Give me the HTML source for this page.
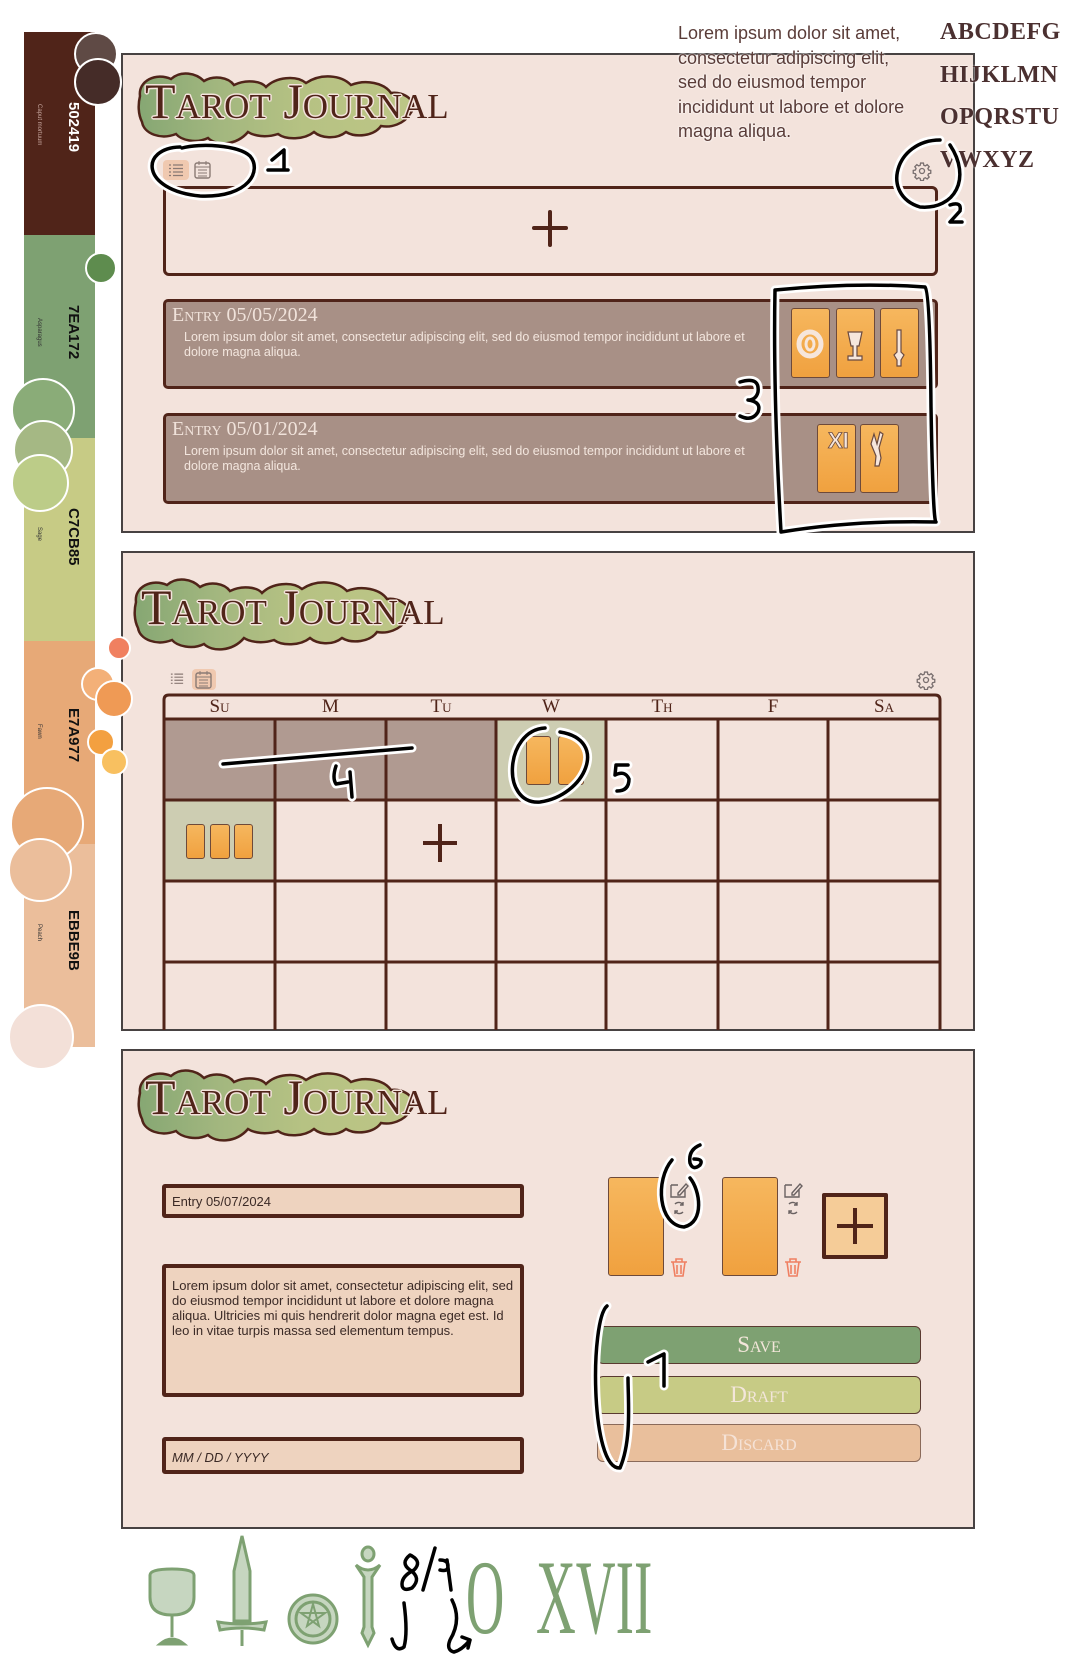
<!DOCTYPE html>
<html><head><meta charset="utf-8">
<style>
*{margin:0;padding:0;box-sizing:border-box}
body{width:1080px;height:1677px;background:#fff;position:relative;overflow:hidden;font-family:"Liberation Sans",sans-serif}
.a{position:absolute}
.panel{position:absolute;left:121px;width:854px;height:480px;background:#f3e3dc;border:2px solid #474242;overflow:hidden}
.title{position:absolute;font-family:"Liberation Serif",serif;font-variant:small-caps;font-size:50px;color:#502419;white-space:nowrap;
text-shadow:1.5px 0 #f3e3dc,-1.5px 0 #f3e3dc,0 1.5px #f3e3dc,0 -1.5px #f3e3dc,1px 1px #f3e3dc,-1px -1px #f3e3dc,1px -1px #f3e3dc,-1px 1px #f3e3dc;letter-spacing:0px}
.sc{font-family:"Liberation Serif",serif;font-variant:small-caps}
.entry{position:absolute;left:163px;width:775px;background:#a89086;border:3px solid #502419;border-radius:5px}
.entry .h{position:absolute;left:6px;top:2px;font-size:20px;color:#f0e2da}
.entry .t{position:absolute;left:18px;top:28px;font-size:12.5px;line-height:15px;color:#f3e6de;width:600px}
.card{position:absolute;background:linear-gradient(#f6b75e,#f0a13f);border:1px solid #6e4a3a;border-radius:3px}
.cell{position:absolute}
.inp{position:absolute;left:162px;width:362px;background:#eed3bf;border:4px solid #502419;border-radius:3px;font-size:13px;color:#3b2a26;padding:6px 6px}
.btn{position:absolute;left:597px;width:324px;height:38px;border:1.5px solid #5a3a30;border-radius:6px;text-align:center;font-size:23px;line-height:36px;color:#f3e6da}
</style></head><body>

<div class="a" style="left:24px;top:32px;width:71px;height:203px;background:#502419"></div>
<div class="a" style="left:24px;top:235px;width:71px;height:203px;background:#7ea172"></div>
<div class="a" style="left:24px;top:438px;width:71px;height:203px;background:#c7cb85"></div>
<div class="a" style="left:24px;top:641px;width:71px;height:203px;background:#e7a977"></div>
<div class="a" style="left:24px;top:844px;width:71px;height:203px;background:#ebbe9b"></div>
<div class="a" style="left:24px;top:32px;width:71px;height:1015px">
 <div class="a" style="left:30px;top:70px;transform-origin:0 0;transform:translate(28px,0) rotate(90deg);font-weight:bold;font-size:15px;color:#fff;white-space:nowrap">502419</div>
 <div class="a" style="left:10px;top:72px;transform-origin:0 0;transform:translate(8px,0) rotate(90deg);font-size:6px;color:#c8a8a0;white-space:nowrap">Caput mortuum</div>
 <div class="a" style="left:30px;top:273px;transform-origin:0 0;transform:translate(28px,0) rotate(90deg);font-weight:bold;font-size:15px;color:#111;white-space:nowrap">7EA172</div>
 <div class="a" style="left:10px;top:286px;transform-origin:0 0;transform:translate(8px,0) rotate(90deg);font-size:6px;color:#333;white-space:nowrap">Asparagus</div>
 <div class="a" style="left:30px;top:476px;transform-origin:0 0;transform:translate(28px,0) rotate(90deg);font-weight:bold;font-size:15px;color:#111;white-space:nowrap">C7CB85</div>
 <div class="a" style="left:10px;top:495px;transform-origin:0 0;transform:translate(8px,0) rotate(90deg);font-size:6px;color:#333;white-space:nowrap">Sage</div>
 <div class="a" style="left:30px;top:676px;transform-origin:0 0;transform:translate(28px,0) rotate(90deg);font-weight:bold;font-size:15px;color:#111;white-space:nowrap">E7A977</div>
 <div class="a" style="left:10px;top:692px;transform-origin:0 0;transform:translate(8px,0) rotate(90deg);font-size:6px;color:#333;white-space:nowrap">Fawn</div>
 <div class="a" style="left:30px;top:878px;transform-origin:0 0;transform:translate(28px,0) rotate(90deg);font-weight:bold;font-size:15px;color:#111;white-space:nowrap">EBBE9B</div>
 <div class="a" style="left:10px;top:892px;transform-origin:0 0;transform:translate(8px,0) rotate(90deg);font-size:6px;color:#333;white-space:nowrap">Peach</div>
</div>

<div class="panel" style="top:53px"></div>
<div class="panel" style="top:551px"></div>
<div class="panel" style="top:1049px"></div>

<svg class="a" style="left:136px;top:66px" width="290" height="82" viewBox="0 0 290 82">
<defs><linearGradient id="lg" x1="0" x2="1"><stop offset="0" stop-color="#86a773"/><stop offset="0.3" stop-color="#a3b77f"/><stop offset="0.6" stop-color="#b6c283"/><stop offset="1" stop-color="#bdc686"/></linearGradient></defs>
<path id="blob" d="M4,30 C2,15 20,6 35,13 C45,4 60,7 68,15 C78,9 92,11 98,19 C110,13 125,15 130,21 C140,11 160,9 170,17 C185,7 205,9 215,19 C230,13 248,17 255,27 C268,25 284,36 274,48 C268,58 255,62 245,60 C238,70 220,72 210,66 C200,74 185,72 178,66 C168,74 150,74 142,68 C130,72 118,70 112,66 C100,80 80,80 72,72 C60,78 45,74 40,68 C25,74 8,68 6,56 C2,48 2,38 4,30 Z" fill="url(#lg)" stroke="#502419" stroke-width="2.5"/>
</svg>
<svg class="a" style="left:132px;top:572px" width="290" height="82" viewBox="0 0 290 82"><use href="#blob"/></svg>
<svg class="a" style="left:136px;top:1063px" width="290" height="82" viewBox="0 0 290 82"><use href="#blob"/></svg>
<div class="title" style="left:145px;top:72px">Tarot Journal</div>
<div class="title" style="left:141px;top:578px">Tarot Journal</div>
<div class="title" style="left:145px;top:1068px">Tarot Journal</div>

<div class="a" style="left:163px;top:160px;width:26px;height:20px;background:#f0c9b0;border-radius:4px"></div>
<svg class="a" style="left:168px;top:163px" width="16" height="14" viewBox="0 0 16 14" stroke="#8a7a74" stroke-width="1.3"><path d="M1 2h2M5 2h10M1 5.5h2M5 5.5h10M1 9h2M5 9h10M1 12.5h2M5 12.5h10"/></svg>
<svg class="a" style="left:194px;top:160px" width="17" height="19" viewBox="0 0 17 19" fill="none" stroke="#8a7a74" stroke-width="1.4"><rect x="1" y="3" width="15" height="15" rx="2"/><path d="M1 7h15M5 1v4M12 1v4M4 10h9M4 13h9M4 16h9" stroke-width="1"/></svg>
<svg class="a" style="left:912px;top:161px" width="20" height="20" viewBox="0 0 24 24" fill="none" stroke="#7a7070" stroke-width="1.6"><circle cx="12" cy="12" r="3"/><path d="M10.3 2.5h3.4l.5 2.6 1.8.8 2.2-1.5 2.4 2.4-1.5 2.2.8 1.8 2.6.5v3.4l-2.6.5-.8 1.8 1.5 2.2-2.4 2.4-2.2-1.5-1.8.8-.5 2.6h-3.4l-.5-2.6-1.8-.8-2.2 1.5-2.4-2.4 1.5-2.2-.8-1.8-2.6-.5v-3.4l2.6-.5.8-1.8-1.5-2.2 2.4-2.4 2.2 1.5 1.8-.8z"/></svg>

<div class="a" style="left:163px;top:186px;width:775px;height:90px;border:3px solid #502419;border-radius:3px 6px 6px 6px"></div>
<div class="a" style="left:532px;top:226px;width:36px;height:4px;background:#502419;border-radius:2px"></div>
<div class="a" style="left:548px;top:210px;width:4px;height:37px;background:#502419;border-radius:2px"></div>

<div class="entry" style="top:299px;height:90px"><div class="h sc">Entry 05/05/2024</div><div class="t">Lorem ipsum dolor sit amet, consectetur adipiscing elit, sed do eiusmod tempor incididunt ut labore et<br>dolore magna aliqua.</div></div>
<div class="entry" style="top:413px;height:91px"><div class="h sc">Entry 05/01/2024</div><div class="t">Lorem ipsum dolor sit amet, consectetur adipiscing elit, sed do eiusmod tempor incididunt ut labore et<br>dolore magna aliqua.</div></div>
<div class="card" style="left:791px;top:308px;width:39px;height:70px"></div>
<div class="card" style="left:836px;top:308px;width:39px;height:70px"></div>
<div class="card" style="left:880px;top:308px;width:39px;height:70px"></div>
<div class="card" style="left:817px;top:424px;width:39px;height:69px"></div>
<div class="card" style="left:860px;top:424px;width:39px;height:69px"></div>
<svg class="a" style="left:791px;top:308px" width="130" height="186" fill="#f6e6dc" stroke="#6a4a40" stroke-width="1.2">
<ellipse cx="19" cy="36" rx="11" ry="12" fill="none" stroke="#f6e6dc" stroke-width="5"/><ellipse cx="19" cy="36" rx="4" ry="6" fill="none" stroke="#f6e6dc" stroke-width="3"/>
<path d="M57 24h14l-3 14h-2v10h5v4h-14v-4h5v-10h-2z"/>
<path d="M106 22h4v22l3 3-3 5v6h-4v-6l-3-5 3-3z"/>
<text x="37" y="140" font-family="Liberation Sans" font-weight="bold" font-size="22" fill="#f6e6dc" stroke="#6a4a40" stroke-width="0.8">XI</text>
<path d="M83 126l3 10 3-12 3 2-4 14 2 10-2 8h-4l1-10-5-12z"/>
</svg>

<div class="a" style="left:678px;top:21px;font-size:18px;line-height:24.5px;color:#5a3c38;white-space:nowrap;text-shadow:0 0 2px #fff,0 0 2px #fff">Lorem ipsum dolor sit amet,<br>consectetur adipiscing elit,<br>sed do eiusmod tempor<br>incididunt ut labore et dolore<br>magna aliqua.</div>
<div class="a" style="left:940px;top:11px;font-family:'Liberation Serif',serif;font-weight:bold;font-size:24px;line-height:42.5px;color:#4b3030;text-shadow:0 0 2px #fff;letter-spacing:0.5px">ABCDEFG<br>HIJKLMN<br>OPQRSTU<br>VWXYZ</div>

<div class="a" style="left:192px;top:669px;width:24px;height:21px;background:#f0c9b0;border-radius:4px"></div>
<svg class="a" style="left:170px;top:672px" width="14" height="13" viewBox="0 0 16 14" stroke="#8a7a74" stroke-width="1.3"><path d="M1 2h2M5 2h10M1 5.5h2M5 5.5h10M1 9h2M5 9h10M1 12.5h2M5 12.5h10"/></svg>
<svg class="a" style="left:195px;top:670px" width="17" height="19" viewBox="0 0 17 19" fill="none" stroke="#8a7a74" stroke-width="1.4"><rect x="1" y="3" width="15" height="15" rx="2"/><path d="M1 7h15M5 1v4M12 1v4M4 10h9M4 13h9M4 16h9" stroke-width="1"/></svg>
<svg class="a" style="left:916px;top:670px" width="20" height="20" viewBox="0 0 24 24" fill="none" stroke="#7a7070" stroke-width="1.6"><circle cx="12" cy="12" r="3"/><path d="M10.3 2.5h3.4l.5 2.6 1.8.8 2.2-1.5 2.4 2.4-1.5 2.2.8 1.8 2.6.5v3.4l-2.6.5-.8 1.8 1.5 2.2-2.4 2.4-2.2-1.5-1.8.8-.5 2.6h-3.4l-.5-2.6-1.8-.8-2.2 1.5-2.4-2.4 1.5-2.2-.8-1.8-2.6-.5v-3.4l2.6-.5.8-1.8-1.5-2.2 2.4-2.4 2.2 1.5 1.8-.8z"/></svg>

<div class="cell" style="left:164px;top:719px;width:332px;height:81px;background:#b09a91"></div>
<div class="cell" style="left:496px;top:719px;width:110px;height:81px;background:#cdcdb2"></div>
<div class="cell" style="left:164px;top:800px;width:111px;height:81px;background:#cdcdb2"></div>
<svg class="a" style="left:0;top:0;pointer-events:none" width="1080" height="1677">
<g stroke="#502419" stroke-width="3" fill="none">
<path d="M164 1030V700q0-5 5-5H935q5 0 5 5V1030"/>
<path d="M164 719H940M164 800H940M164 881H940M164 962H940"/>
<path d="M275 719V1030M386 719V1030M496 719V1030M606 719V1030M718 719V1030M828 719V1030"/>
</g></svg>
<div class="a sc" style="left:164px;top:695px;width:776px;display:flex;font-size:19px;color:#502419;line-height:24px">
<div style="width:111px;text-align:center">Su</div><div style="width:111px;text-align:center">M</div><div style="width:110px;text-align:center">Tu</div><div style="width:110px;text-align:center">W</div><div style="width:112px;text-align:center">Th</div><div style="width:110px;text-align:center">F</div><div style="width:112px;text-align:center">Sa</div></div>
<div class="card" style="left:526px;top:736px;width:25px;height:49px"></div>
<div class="card" style="left:558px;top:736px;width:26px;height:49px"></div>
<div class="card" style="left:186px;top:824px;width:19px;height:35px"></div>
<div class="card" style="left:210px;top:824px;width:20px;height:35px"></div>
<div class="card" style="left:234px;top:824px;width:19px;height:35px"></div>
<div class="a" style="left:423px;top:841px;width:34px;height:4px;background:#502419"></div>
<div class="a" style="left:438px;top:824px;width:4px;height:38px;background:#502419"></div>

<div class="inp" style="top:1184px;height:34px">Entry 05/07/2024</div>
<div class="inp" style="top:1264px;height:133px;line-height:15px;padding-top:10px">Lorem ipsum dolor sit amet, consectetur adipiscing elit, sed do eiusmod tempor incididunt ut labore et dolore magna aliqua. Ultricies mi quis hendrerit dolor magna eget est. Id leo in vitae turpis massa sed elementum tempus.</div>
<div class="inp" style="top:1437px;height:37px;font-style:italic;padding-top:9px">MM / DD / YYYY</div>
<div class="card" style="left:608px;top:1177px;width:56px;height:99px"></div>
<div class="card" style="left:722px;top:1177px;width:56px;height:99px"></div>
<svg class="a" style="left:0;top:0" width="1080" height="1677" fill="none">
<g stroke="#6a6262" stroke-width="1.4">
<path d="M671 1185h7M671 1185v12h14v-7M678 1193l8-9 2 2-8 9h-2z"/>
<path d="M785 1185h7M785 1185v12h14v-7M792 1193l8-9 2 2-8 9h-2z"/>
<path d="M675 1204a5 5 0 0 1 8 1M683 1202v3h-3M683 1212a5 5 0 0 1-8-1M675 1214v-3h3"/>
<path d="M789 1204a5 5 0 0 1 8 1M797 1202v3h-3M797 1212a5 5 0 0 1-8-1M789 1214v-3h3"/>
</g>
<g stroke="#f08062" stroke-width="1.6">
<path d="M671 1262h16M676 1262v-3h6v3M673 1262l2 14h8l2-14M677 1265v9M681 1265v9"/>
<path d="M785 1262h16M790 1262v-3h6v3M787 1262l2 14h8l2-14M791 1265v9M795 1265v9"/>
</g></svg>
<div class="a" style="left:822px;top:1193px;width:66px;height:66px;background:#f5cc98;border:4px solid #502419;border-radius:2px"></div>
<div class="a" style="left:837px;top:1224px;width:36px;height:4px;background:#502419"></div>
<div class="a" style="left:853px;top:1208px;width:4px;height:36px;background:#502419"></div>
<div class="btn sc" style="top:1326px;background:#7ea172">Save</div>
<div class="btn sc" style="top:1376px;background:#c7cb85">Draft</div>
<div class="btn sc" style="top:1424px;background:#e9bf9c;border-color:#8a6a5a;color:#f5e2d6">Discard</div>

<svg class="a" style="left:0;top:0" width="140" height="1100" stroke="#fff" stroke-width="2">
<circle cx="96" cy="54" r="21" fill="#5f4a45"/><circle cx="98" cy="82" r="23" fill="#452c28"/>
<circle cx="101" cy="268" r="15" fill="#5e8c4e"/>
<circle cx="43" cy="410" r="31" fill="#8aac78"/><circle cx="43" cy="450" r="29" fill="#a5b884"/><circle cx="40" cy="483" r="28" fill="#bccc88"/>
<circle cx="119" cy="648" r="11" fill="#f08060"/>
<circle cx="98" cy="684" r="16" fill="#f3b078"/><circle cx="114" cy="699" r="18" fill="#ef9a55"/>
<circle cx="101" cy="742" r="13" fill="#f3a040"/><circle cx="114" cy="762" r="13" fill="#f8c060"/>
<circle cx="47" cy="824" r="36" fill="#e7a977"/><circle cx="40" cy="870" r="31" fill="#ebbe9b"/>
<circle cx="41" cy="1037" r="32" fill="#f3e0d8"/>
</svg>

<svg class="a" style="left:140px;top:1530px" width="540" height="130">
<g fill="#c6d6c0" stroke="#7ea172" stroke-width="3">
<path d="M10 45q0-6 22-6t22 6v22q0 18-22 18t-22-18z"/>
<path d="M32 85v22M20 114q12-10 24 0z" fill="#7ea172"/>
<path d="M102 6l8 35v50h-16v-50z"/>
<path d="M78 92q24 4 48 0l-2 8q-22-4-44 0zM102 100v16" />
<circle cx="173" cy="89" r="24"/><circle cx="173" cy="89" r="17"/>
<path d="M173 74l6 22-18-13h24l-18 13z" fill="none" stroke-width="2"/>
<ellipse cx="228" cy="24" rx="6" ry="7"/>
<path d="M216 35q12 10 24 0l-8 12v50l2 6-6 12-6-12 2-6v-50z"/>
</g>
<g fill="#7ea172" font-family="Liberation Serif" font-size="106">
<text transform="translate(326,103) scale(0.5,1)">O</text>
<text transform="translate(396,103) scale(0.52,1)">XVII</text>
</g>
</svg>

<svg class="a" style="left:0;top:0" width="1080" height="1677" fill="none" stroke-linecap="round" stroke-linejoin="round">
<defs><g id="ann">
<path d="M180 147C140 148 140 190 200 196C250 198 262 170 250 156C238 145 200 143 182 148"/>
<path d="M272 160l12-10v20M268 170h20"/>
<path d="M940 140C895 140 880 195 920 207C955 210 972 178 950 145"/>
<path d="M950 205q12-4 10 6l-10 11h12"/>
<path d="M775 290q80-8 150-3q5 5 6 120q2 115 5 115q-80-2-155 10q-8-140-6-242z"/>
<path d="M740 382q20-6 18 10q-2 8-10 8q14 2 10 12q-6 10-18 4"/>
<path d="M223 764L412 748M336 766q-4 12 0 18l12-2M350 772l2 25"/>
<path d="M545 728C505 730 500 805 540 802C585 796 610 740 560 732"/>
<path d="M628 765h-12l-1 10q10-5 14 4q0 12-12 12"/>
<path d="M672 1160C655 1180 658 1225 684 1227C705 1222 700 1190 690 1178"/>
<path d="M700 1145q-12 5-10 18q3 8 10 2q4-6-6-6"/>
<path d="M607 1306C590 1320 590 1470 620 1468C632 1440 628 1400 628 1378"/>
<path d="M648 1362l16-8v32"/>
<path d="M410 1555q-10 8 0 15q12 8 2 18q-10 4-10-4q0-8 12-14q8-8-2-14zM435 1548l-12 42M440 1560q8 0 8 6t-8 4M447 1560l4 30"/>
<path d="M404 1603q4 30 0 44q-8 6-12-8M452 1600q10 20-2 40q-4 10 4 12q8-2 16-12M462 1637l8 3-2 8"/>
</g></defs>
<use href="#ann" stroke="#fff" stroke-width="9"/>
<use href="#ann" stroke="#000" stroke-width="3.5"/>
</svg>
</body></html>
